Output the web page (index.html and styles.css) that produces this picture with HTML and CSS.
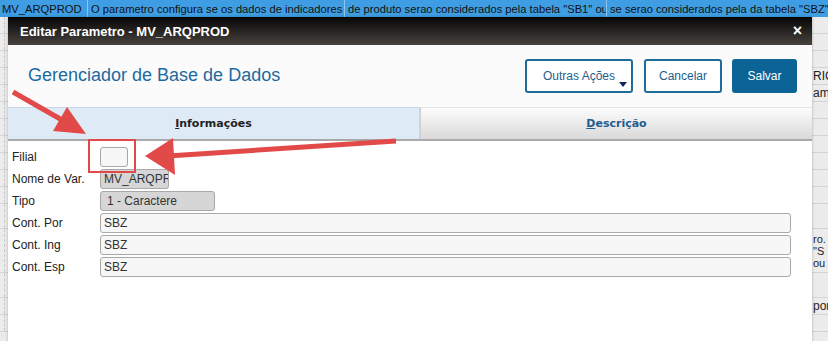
FILE: index.html
```html
<!DOCTYPE html>
<html lang="pt">
<head>
<meta charset="utf-8">
<title>Editar Parametro</title>
<link rel="stylesheet" href="styles.css">
</head>
<body>
<div class="page">
  <div class="grid">
    <div class="row selected">
      <div class="cell c1">MV_ARQPROD</div>
      <div class="cell c2">O parametro configura se os dados de indicadores</div>
      <div class="cell c3">de produto serao considerados pela tabela "SB1" ou</div>
      <div class="cell c4">se serao considerados pela da tabela "SBZ"</div>
    </div>
    <div class="row"><span class="peek"></span></div>
    <div class="row"><span class="peek"></span></div>
    <div class="row"><span class="peek"></span></div>
    <div class="row"><span class="peek">RIC</span></div>
    <div class="row"><span class="peek">ame</span></div>
    <div class="row"><span class="peek"></span></div>
    <div class="row"><span class="peek"></span></div>
    <div class="row"><span class="peek"></span></div>
    <div class="row"><span class="peek"></span></div>
    <div class="row"><span class="peek"></span></div>
    <div class="row"><span class="peek"></span></div>
    <div class="row row-mid"><span class="peek"></span></div>
    <div class="row row-tall"><span class="peek stack"><span>ro.</span><span>"S</span><span>ou</span></span></div>
    <div class="row row-mid"><span class="peek"></span></div>
    <div class="row"><span class="peek">por</span></div>
    <div class="row"><span class="peek"></span></div>
  </div>

  <div class="modal">
    <div class="modal-header">
      <span class="modal-title">Editar Parametro - MV_ARQPROD</span>
      <span class="close">×</span>
    </div>
    <div class="toolbar">
      <h1 class="app-title">Gerenciador de Base de Dados</h1>
      <div class="actions">
        <button class="btn btn-outline btn-more">Outras Ações<span class="caret"></span></button>
        <button class="btn btn-outline btn-cancel">Cancelar</button>
        <button class="btn btn-primary">Salvar</button>
      </div>
    </div>
    <div class="tabs">
      <div class="tab active"><u>I</u>nformações</div>
      <div class="tab"><u>D</u>escrição</div>
    </div>
    <div class="form">
      <label class="lbl">Filial</label>
      <div class="field"><span class="input w-filial"></span></div>
      <label class="lbl">Nome de Var.</label>
      <div class="field"><span class="input disabled w-nome">MV_ARQPR</span></div>
      <label class="lbl">Tipo</label>
      <div class="field"><span class="input disabled w-tipo">1 - Caractere</span></div>
      <label class="lbl">Cont. Por</label>
      <div class="field"><span class="input w-full">SBZ</span></div>
      <label class="lbl">Cont. Ing</label>
      <div class="field"><span class="input w-full">SBZ</span></div>
      <label class="lbl">Cont. Esp</label>
      <div class="field"><span class="input w-full">SBZ</span></div>
    </div>
  </div>

  <svg class="annot" width="828" height="341" viewBox="0 0 828 341">
    <line x1="13" y1="92" x2="62" y2="120" stroke="#e24a4a" stroke-width="5"/>
    <polygon points="53,131 67,107 86,134" fill="#e24a4a"/>
    <line x1="396" y1="141" x2="168" y2="156" stroke="#e24a4a" stroke-width="5"/>
    <polygon points="173,138 175,175 145,156" fill="#e24a4a"/>
    <rect x="89" y="140" width="46" height="32" fill="none" stroke="#e0484c" stroke-width="2"/>
  </svg>
</div>
</body>
</html>
```

FILE: styles.css
```css
* { box-sizing: border-box; }
html, body { margin: 0; padding: 0; }
body {
  width: 828px;
  height: 341px;
  overflow: hidden;
  font-family: "Liberation Sans", Arial, sans-serif;
  background: #ebebeb;
}
.page { position: relative; width: 828px; height: 341px; overflow: hidden; }

.grid { display: flex; flex-direction: column; }
.row {
  height: 17px;
  flex: none;
  display: flex;
  align-items: center;
  border-bottom: 1px solid #d4d4d4;
  background: #ececec;
  font-size: 12px;
  color: #222;
}
.row::before {
  content: "";
  width: 4px;
  height: 100%;
  border-right: 1px dashed #c8c8c8;
  flex: none;
}
.row-mid { height: 25px; }
.row-tall { height: 44px; }
.stack { display: flex; flex-direction: column; font-size: 11px; line-height: 12px; }
.row.selected { background: #3f9ee3; border-bottom: none; color: #111; font-size: 11.2px; }
.row.selected::before { display: none; }
.cell { height: 100%; display: flex; align-items: center; padding-left: 3px; white-space: nowrap; overflow: hidden; border-right: 1px solid #8cc5ef; }
.c1 { width: 88px; padding-left: 2px; }
.c2 { width: 257px; }
.c3 { width: 262px; }
.c4 { flex: 1; border-right: none; }
.peek { margin-left: 808px; white-space: nowrap; }

.modal {
  position: absolute;
  left: 8px;
  top: 17px;
  width: 804px;
  height: 340px;
  background: #fff;
  box-shadow: 0 0 3px rgba(0,0,0,0.25);
}
.modal-header {
  height: 28px;
  background: linear-gradient(#060606, #47423e);
  display: flex;
  align-items: center;
  justify-content: space-between;
  padding: 0 10px 0 12px;
  color: #fff;
}
.modal-title { font-weight: bold; font-size: 13px; }
.close { font-size: 16px; font-weight: bold; line-height: 1; }

.toolbar {
  height: 62px;
  display: flex;
  align-items: center;
  justify-content: space-between;
  padding: 0 15px 0 20px;
  background: #fbfbfb;
}
.app-title {
  margin: 0 0 2px;
  font-weight: normal;
  font-size: 18px;
  color: #1d6a9f;
}
.actions { display: flex; gap: 11px; }
.btn {
  height: 34px;
  border-radius: 3px;
  font-family: "Liberation Sans", Arial, sans-serif;
  font-size: 12px;
  position: relative;
}
.btn-outline { background: #fff; border: 2px solid #1f6c9c; color: #1e5e8c; }
.btn-more { width: 108px; }
.btn-cancel { width: 78px; }
.btn-primary { width: 65px; background: #0b6396; border: none; color: #fff; margin-left: -1px; }
.caret {
  position: absolute;
  right: 4px;
  bottom: 4px;
  border-left: 4px solid transparent;
  border-right: 4px solid transparent;
  border-top: 5px solid #13245a;
}

.tabs {
  display: flex;
  height: 34px;
  border-bottom: 2px solid #a9a9a9;
}
.tab {
  flex: 1;
  display: flex;
  align-items: center;
  justify-content: center;
  font-family: "DejaVu Sans", Verdana, sans-serif;
  font-weight: bold;
  font-size: 11px;
  color: #1f5d8e;
  background: linear-gradient(#fcfcfc, #d9d9d9);
  border-top: 1px solid #e6e6e6;
  border-left: 1px solid #cfcfcf;
}
.tab.active {
  flex: 0 0 412px;
  background: #dfeaf7;
  color: #222;
  border-top: 1px solid #c7d8ea;
  border-left: none;
  border-right: 1px solid #c7d8ea;
}

.form {
  display: grid;
  grid-template-columns: 88px 1fr;
  row-gap: 2px;
  padding: 6px 0 0 4px;
  align-items: center;
}
.lbl { font-size: 12px; color: #222; height: 20px; display: flex; align-items: center; }
.field { height: 20px; display: flex; align-items: center; }
.input {
  display: flex;
  align-items: center;
  height: 20px;
  padding-left: 3px;
  border: 1px solid #a8a8a8;
  border-radius: 3px;
  background: #f7f7f7;
  font-size: 12px;
  color: #333;
  white-space: nowrap;
  overflow: hidden;
}
.input.disabled { background: #d6d6d6; }
.w-filial { width: 28px; }
.w-nome { width: 69px; }
.w-tipo { width: 115px; padding-left: 6px; }
.w-full { width: 691px; }

.annot { position: absolute; left: 0; top: 0; pointer-events: none; }
```
